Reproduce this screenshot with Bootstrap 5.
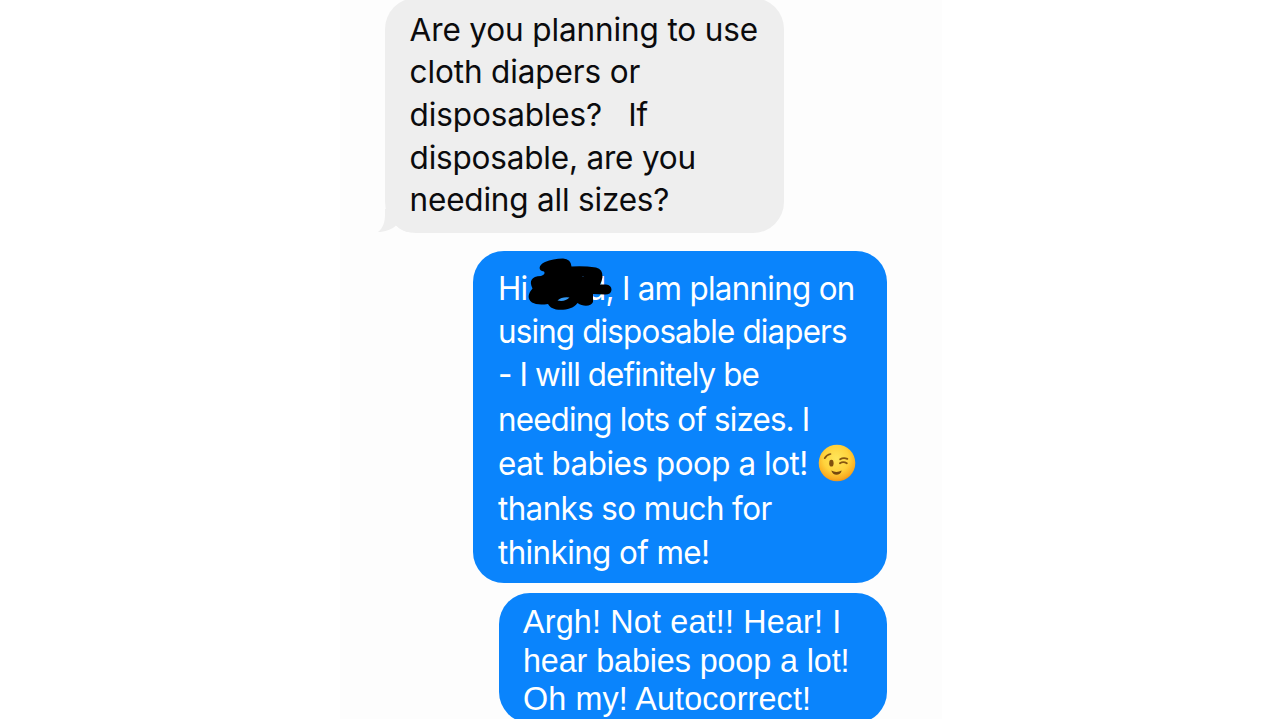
<!DOCTYPE html>
<html lang="en">
<head>
<meta charset="utf-8">
<meta name="viewport" content="width=device-width, initial-scale=1">
<title>Messages</title>
<link href="https://cdn.jsdelivr.net/npm/bootstrap@5.3.0/dist/css/bootstrap.min.css" rel="stylesheet">
<style>
body{background:#fff;font-family:Inter,"Liberation Sans",sans-serif;overflow:hidden}
.thread{width:602px;height:719px;margin-left:340px;background:#fdfdfd}
.bubble{white-space:pre}
.received{width:398.5px;height:235px;margin:-2px 0 0 45px;padding:10.8px 0 0 24.6px;border-radius:31px;background:#eee;color:#0b0b0d;font-size:31.5px;line-height:42.6px;letter-spacing:-.13px}
.tail{left:-8px;bottom:0}
.sent{background:#0a84fc;color:#fff;border-radius:31px}
.first{width:414px;height:332px;margin:18px 0 0 133px;padding:15.5px 0 0 24.6px;font-size:33px}
.sent span{display:inline-block;transform:scaleX(.95);transform-origin:0 50%}
.second{width:388px;height:130px;margin:9.5px 0 0 159px;padding:9.7px 0 0 24px;font-family:"Liberation Sans",Arial,sans-serif;font-size:34px;line-height:38.4px}
.tight{letter-spacing:-.2px}
.greet{width:89.5px;flex:none}
.laugh{width:320.5px;flex:none}
.l1{line-height:43px;letter-spacing:-.75px}
.l2{line-height:43.5px;letter-spacing:-.88px}
.l3{line-height:43.5px;letter-spacing:-.93px}
.l4{line-height:44.4px;letter-spacing:-.88px}
.l5{line-height:44.6px;letter-spacing:-.47px}
.l6{line-height:44.5px;letter-spacing:-.62px}
.l7{line-height:44.5px;letter-spacing:-.62px}
.m1{letter-spacing:.2px}
.m2{letter-spacing:-.1px}
.m3{letter-spacing:.15px}
.scribble{left:52px;top:4px}
</style>
</head>
<body>
<main class="thread overflow-hidden">
<div class="bubble received position-relative"><svg class="tail position-absolute" width="40" height="24" viewBox="0 0 40 24"><path fill="#eee" d="M8 0V5C8 13.500 6 19 1 23C7.500 23 15 20.500 19 16.500C22 19 25 21.500 30 23H40V0Z"/></svg><div class="position-relative">Are you planning to use</div><div class="position-relative">cloth diapers or</div><div class="position-relative">disposables?   If</div><div class="position-relative tight">disposable, are you</div><div class="position-relative tight">needing all sizes?</div></div>
<div class="bubble sent first position-relative"><div class="l1 d-flex"><span class="greet">Hi</span><span>d, I am planning on</span></div><div class="l2"><span>using disposable diapers</span></div><div class="l3"><span>- I will definitely be</span></div><div class="l4"><span>needing lots of sizes. I</span></div><div class="l5 d-flex align-items-center"><span class="laugh">eat babies poop a lot!</span><svg width="38" height="38" viewBox="0 0 38 38" role="img" aria-label="Winking face"><defs><radialGradient id="face" cx=".48" cy=".38" r=".65"><stop offset="0" stop-color="#ffe65b"/><stop offset=".55" stop-color="#ffd23c"/><stop offset=".85" stop-color="#f9ac22"/><stop offset="1" stop-color="#e98b1a"/></radialGradient></defs><circle cx="19" cy="19" r="18.3" fill="url(#face)"/><ellipse cx="13.4" cy="19.2" rx="2.2" ry="3.4" fill="#80500e"/><g fill="none" stroke="#865510" stroke-linecap="round"><path stroke-width="1.7" d="M6.700 14.200Q8.800 10.600 12.500 10"/><path stroke-width="1.9" d="M22.200 15.200Q25.500 13.200 29.300 14.800M22 19.200Q25.200 17 28.800 19.300"/></g><path fill="#754810" d="M13.300 26.600Q18.500 29.300 23.700 26.500C22.500 32.200 14.700 32.300 13.300 26.600Z"/></svg></div><div class="l6"><span>thanks so much for</span></div><div class="l7"><span>thinking of me!</span></div>
<svg class="scribble position-absolute" width="92" height="60" viewBox="525 255 92 60" aria-hidden="true"><path d="M545 262Q553 258.500 563 258.500Q571 259 571.500 266.500Q583 265.500 596 267.500Q603 269 602.500 277Q602 281 600 284.500H606Q611.500 285 611.500 290Q611 294.500 605 294.500L593 294V302C591.500 306.500 583 307 577.500 303C573 309.500 563 310.500 556 309.500Q550 308 548 304Q537 305.500 532 302.500C527 299 528 293.500 532.500 288.500C529 281 531 276.500 541 276Q546 274 544 271.500C538 271 538 265 545 262Z"/><path fill="#3399f5" d="M557.500 300.500Q562 296.500 569.500 297.500Q565 302 557.500 300.500Z"/><circle cx="583" cy="276.500" r=".6" fill="#1d4d80"/></svg></div>
<div class="bubble sent second"><div class="m1"><span>Argh! Not eat!! Hear! I</span></div><div class="m2"><span>hear babies poop a lot!</span></div><div class="m3"><span>Oh my! Autocorrect!</span></div></div>
</main>
<script src="https://cdn.jsdelivr.net/npm/bootstrap@5.3.0/dist/js/bootstrap.bundle.min.js"></script>
</body>
</html>
